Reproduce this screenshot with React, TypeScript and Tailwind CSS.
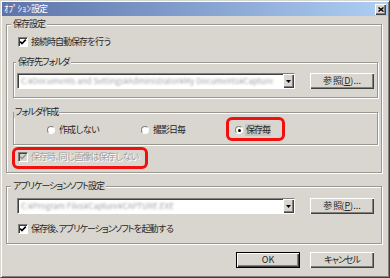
import type { ReactNode } from "react";

const font = "font-['Noto_Sans_CJK_JP','Noto_Sans_CJK_SC',sans-serif]";
const raised = "shadow-[inset_1px_1px_0_#fff,inset_-1px_-1px_0_#404040,inset_-2px_-2px_0_#808080]";
const sunken = "border border-t-[#808080] border-l-[#808080] border-r-white border-b-white shadow-[inset_1px_1px_0_#404040]";

// katakana set proportionally, as the old UI font does
const K = ({ children }: { children: ReactNode }) => <span className="[font-feature-settings:'palt']">{children}</span>;

const Check = ({ disabled }: { disabled?: boolean }) => (
  <span className={`flex h-[10px] w-[10px] shrink-0 items-center justify-center ${sunken} ${disabled ? "bg-[#d9d6d0]" : "bg-white"}`}>
    <svg width="8" height="8" viewBox="0 0 8 8">
      <path d="M1.2 3.6 L3 5.6 L6.8 1.6" fill="none" stroke={disabled ? "#9c9993" : "#000"} strokeWidth="1.6" />
    </svg>
  </span>
);

const Radio = ({ checked }: { checked?: boolean }) => (
  <span className="flex h-[8px] w-[8px] shrink-0 items-center justify-center rounded-full border border-t-[#808080] border-l-[#808080] border-r-white border-b-white bg-white">
    {checked && <span className="h-[3px] w-[3px] rounded-full bg-black" />}
  </span>
);

const Btn = ({ children, isDefault }: { children: ReactNode; isDefault?: boolean }) => (
  <button
    type="button"
    className={`flex h-[16px] w-[64px] items-center justify-center bg-[#d9d6d0] ${raised} ${isDefault ? "border border-black" : ""}`}
  >
    {children}
  </button>
);

const Combo = ({ value }: { value: string }) => (
  <div className={`flex h-[16px] flex-1 items-center bg-white pl-[3px] ${sunken}`}>
    <span className="flex-1 overflow-hidden whitespace-nowrap text-[8px] tracking-normal text-[#a2a2a2] blur-[1.3px]">{value}</span>
    <span className={`flex h-full w-[11px] items-center justify-center bg-[#d9d6d0] ${raised}`}>
      <svg width="5" height="3" viewBox="0 0 5 3">
        <path d="M0 0 H5 L2.5 3 Z" fill="#000" />
      </svg>
    </span>
  </div>
);

const Group = ({ title, className, legendClass, children }: { title: ReactNode; className: string; legendClass: string; children: ReactNode }) => (
  <fieldset className={`border border-[#9a9792] shadow-[inset_1px_1px_0_#fff,1px_1px_0_#fff] ${className}`}>
    <legend className={`bg-[#d9d6d0] leading-[12px] ${legendClass}`}>{title}</legend>
    {children}
  </fieldset>
);

export default function App() {
  return (
    <div
      className={`flex h-[278px] w-[390px] flex-col overflow-hidden border border-t-[#d9d6d0] border-l-[#d9d6d0] border-r-[#404040] border-b-[#404040] bg-[#d9d6d0] p-[1px] text-[9px] leading-[12px] tracking-[-1px] text-[#262626] shadow-[inset_1px_1px_0_#fff,inset_-1px_-1px_0_#808080] ${font}`}
    >
      {/* title bar */}
      <div className="flex h-[14px] shrink-0 items-center justify-between bg-linear-to-r from-[#5d74aa] to-[#aecff4] pl-[2px] pr-[2px]">
        <span className="text-white">
          <span className="tracking-normal">ｵﾌﾟｼｮﾝ</span>設定
        </span>
        <span className={`flex h-[11px] w-[11px] items-center justify-center bg-[#d9d6d0] ${raised}`}>
          <svg width="6" height="5" viewBox="0 0 6 5">
            <path d="M0.5 0.5 L5.5 4.5 M5.5 0.5 L0.5 4.5" stroke="#000" strokeWidth="1.4" />
          </svg>
        </span>
      </div>

      <Group title="保存設定" className="ml-[4px] mr-[6px] mt-[2px] pb-[3px]" legendClass="ml-[4px] px-[2px]">
        <div className="flex h-[24px] items-center gap-[3px] pl-[11px]">
          <Check />
          <span>接続時自動保存を行う</span>
        </div>

        <Group
          title={
            <>
              保存先<K>フォルダ</K>
            </>
          }
          className="ml-[6px] mr-[3px] mt-[2px] pb-[8px] pt-[5px]"
          legendClass="ml-[2px] px-[2px]"
        >
          <div className="flex items-center gap-[15px] pl-[3px] pr-[3px]">
            <Combo value="C:¥Documents and Settings¥Administrator¥My Documents¥Capture" />
            <Btn>
              参&nbsp;&nbsp;照<span className="tracking-normal">(<span className="underline">D</span>)...</span>
            </Btn>
          </div>
        </Group>

        <Group
          title={
            <>
              <K>フォルダ</K>作成
            </>
          }
          className="ml-[6px] mr-[3px] mt-[8px] pb-[2px]"
          legendClass="px-[1px]"
        >
          <div className="flex h-[24px] pl-[33px]">
            <div className="flex w-[94px] items-center gap-[4px]">
              <Radio />
              <span>作成しない</span>
            </div>
            <div className="flex w-[94px] items-center gap-[4px]">
              <Radio />
              <span>撮影日毎</span>
            </div>
            <div className="relative flex items-center gap-[2px]">
              <Radio checked />
              <span className="bg-[#c7c4be] px-[1px]">保存毎</span>
              <span className="absolute left-[-9px] top-[-1px] h-[24px] w-[59px] rounded-[6px] border-[3px] border-[#f01010]" />
            </div>
          </div>
        </Group>

        <div className="relative flex h-[24px] items-center gap-[3px] pl-[11px]">
          <Check disabled />
          <span className="text-[#a3a09a] [text-shadow:1px_1px_0_#fff]">
            保存時<K>、</K>同じ画像は保存しない
          </span>
          <span className="absolute left-[5px] top-[2px] h-[22px] w-[136px] rounded-[6px] border-[3px] border-[#f01010]" />
        </div>
      </Group>

      <Group
        title={
          <>
            <K>アプリケーションソフト</K>設定
          </>
        }
        className="ml-[4px] mr-[6px] mt-[7px] pb-[3px]"
        legendClass="ml-[4px] px-[2px]"
      >
        <div className="mt-[6px] flex items-center gap-[15px] pl-[10px] pr-[7px]">
          <Combo value="C:¥Program Files¥Capture¥CAPTURE.EXE" />
          <Btn>
            参&nbsp;&nbsp;照<span className="tracking-normal">(<span className="underline">P</span>)...</span>
          </Btn>
        </div>
        <div className="mt-[4px] flex h-[22px] items-center gap-[3px] pl-[11px]">
          <Check />
          <span>
            保存後<K>、アプリケーションソフト</K>を起動する
          </span>
        </div>
      </Group>

      <div className="mt-[8px] flex justify-end gap-[10px] pr-[14px]">
        <Btn isDefault>
          <span className="tracking-normal">OK</span>
        </Btn>
        <Btn>
          <K>キャンセル</K>
        </Btn>
      </div>
    </div>
  );
}
